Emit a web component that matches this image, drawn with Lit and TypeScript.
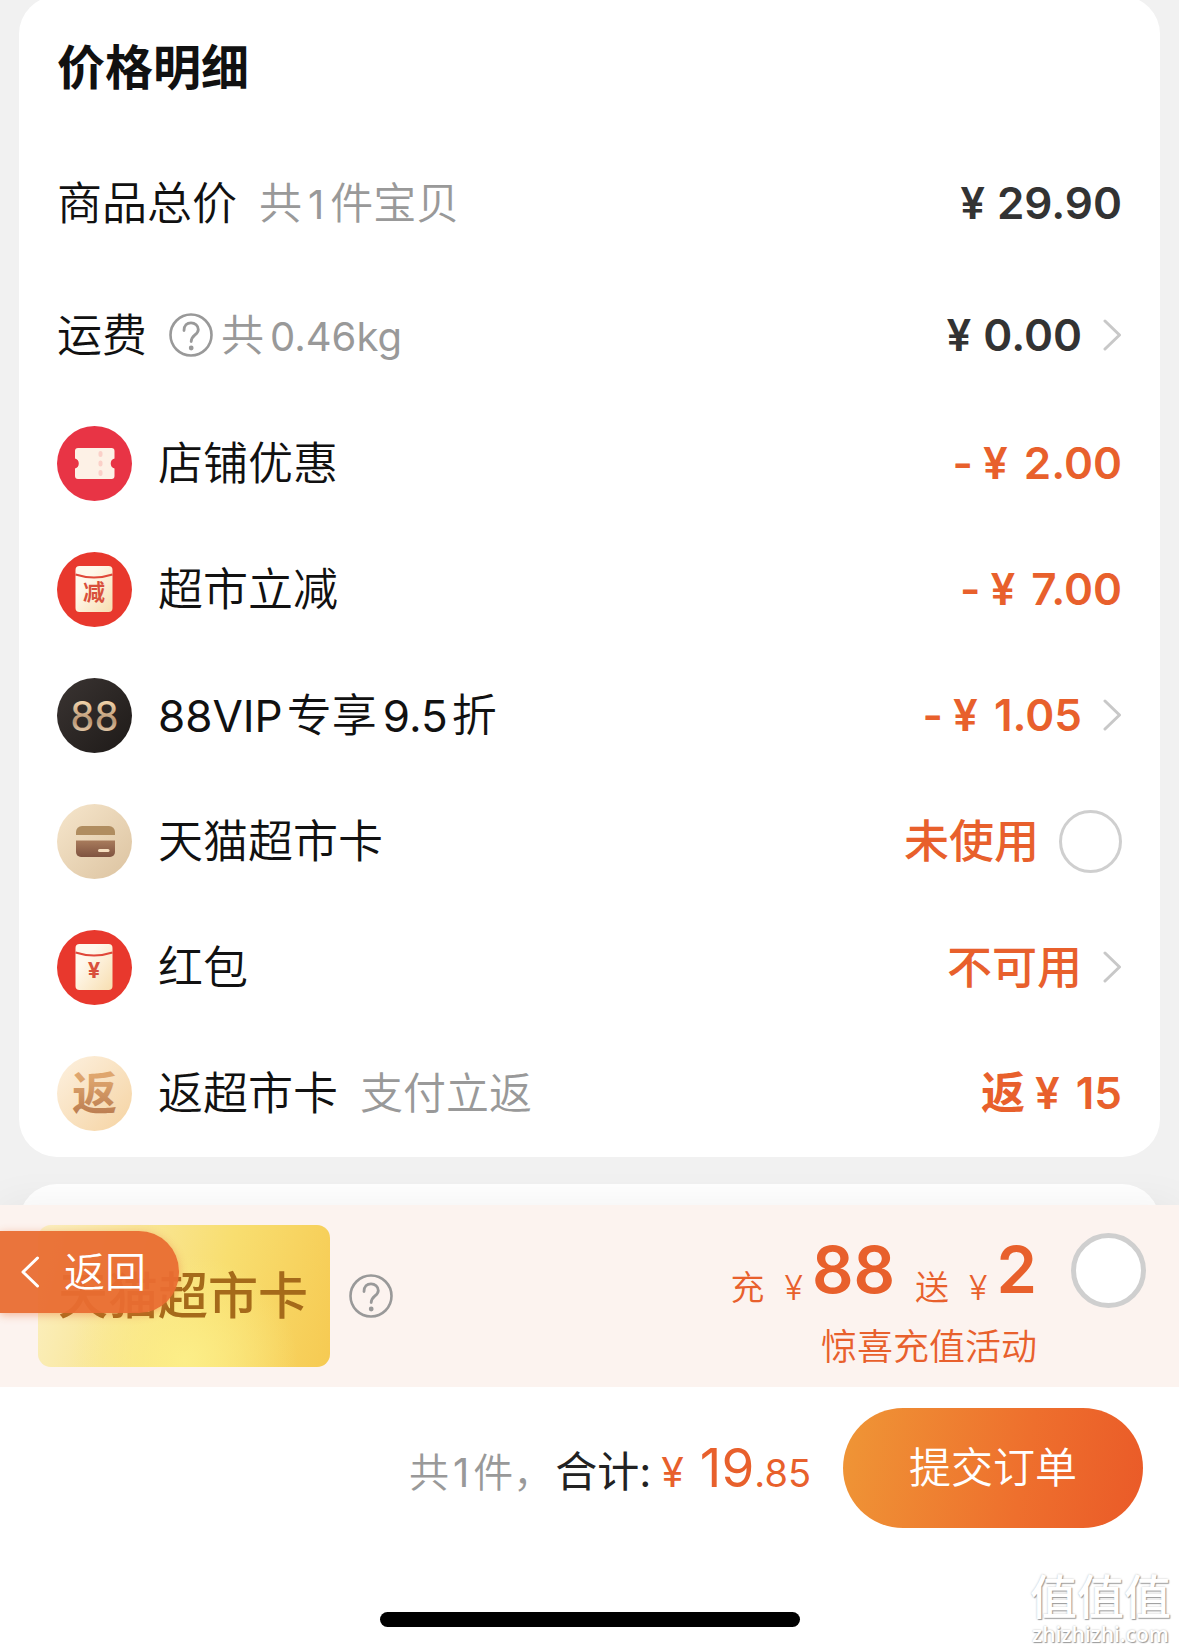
import { LitElement, html, svg, css, nothing } from "lit";
import { customElement, property, state } from "lit/decorators.js";

type IconName = "coupon" | "minus" | "vip" | "card" | "packet" | "cashback";

interface PriceRow {
  label: unknown;
  icon?: IconName;
  note?: unknown;
  help?: boolean;
  prefix?: string;
  amount?: string;
  status?: string;
  dark?: boolean;
  link?: boolean;
  toggle?: boolean;
}

const ROWS: PriceRow[] = [
  { label: "商品总价", note: html`共<span class="num">1</span>件宝贝`, amount: "29.90", dark: true },
  { label: "运费", help: true, note: html`共<span class="num">0.46kg</span>`, amount: "0.00", dark: true, link: true },
  { label: "店铺优惠", icon: "coupon", prefix: "-", amount: "2.00" },
  { label: "超市立减", icon: "minus", prefix: "-", amount: "7.00" },
  {
    label: html`<span class="latin">88VIP</span><span class="cjk">专享</span><span class="latin">9.5</span><span class="cjk">折</span>`,
    icon: "vip",
    prefix: "-",
    amount: "1.05",
    link: true,
  },
  { label: "天猫超市卡", icon: "card", status: "未使用", toggle: true },
  { label: "红包", icon: "packet", status: "不可用", link: true },
  { label: "返超市卡", icon: "cashback", note: "支付立返", prefix: "返", amount: "15" },
];

const envelope = (mark: string, size: number) => svg`
  <circle cx="37.5" cy="37.5" r="37.5" fill="#e8382d" />
  <rect x="18.5" y="14" width="37" height="46" rx="4" fill="url(#cream)" />
  <path d="M18.5 22.5Q37 28.5 55.5 22.5" fill="none" stroke="#e0483a" stroke-width="2" />
  <text x="37" y="48" font-size=${size} class="mark" fill="#d9503c">${mark}</text>`;

const ICONS: Record<IconName, unknown> = {
  coupon: svg`
    <circle cx="37.5" cy="37.5" r="37.5" fill="#e83445" />
    <path d="M21 22H54.500a3 3 0 0 1 3 3V32.500a5.200 5.200 0 0 0 0 10V50a3 3 0 0 1-3 3H21a3 3 0 0 1-3-3V42.500a5.200 5.200 0 0 0 0-10V25a3 3 0 0 1 3-3Z" fill="#fdf1e6" />
    <path d="M43.500 27v2M43.500 36.500v2M43.500 46v2" stroke="#fbd0c8" stroke-width="4" stroke-linecap="round" />`,
  minus: envelope("减", 22),
  vip: svg`
    <circle cx="37.5" cy="37.5" r="37.5" fill="url(#dark)" />
    <text x="37.5" y="53" font-size="43" class="vip" fill="url(#gold)">88</text>`,
  card: svg`
    <circle cx="37.5" cy="37.5" r="37.5" fill="url(#sand)" />
    <path d="M19 31V28a6 6 0 0 1 6-6H52a6 6 0 0 1 6 6V31Z" fill="#b08d60" />
    <path d="M19 36.500H58V48a5 5 0 0 1-5 5H24a5 5 0 0 1-5-5Z" fill="url(#brown)" />
    <path d="M42.500 46.500H51" stroke="#f6dfc0" stroke-width="3" stroke-linecap="round" />`,
  packet: envelope("¥", 22),
  cashback: svg`
    <circle cx="37.5" cy="37.5" r="37.5" fill="url(#peach)" />
    <text x="37.5" y="54" font-size="45" class="mark" fill="url(#copper)">返</text>`,
};

@customElement("row-icon")
export class RowIcon extends LitElement {
  static styles = css`
    :host { display: block; flex: none; }
    .icon { display: block; width: 75px; height: 75px; }
    .mark {
      font-family: Inter, "Noto Sans CJK SC", sans-serif;
      font-weight: 700;
      text-anchor: middle;
    }
    .vip {
      font-family: Roboto, sans-serif;
      font-weight: 400;
      text-anchor: middle;
    }
  `;

  @property() name: IconName = "coupon";

  render() {
    return html`<svg class="icon" viewBox="0 0 75 75" aria-hidden="true">
      <defs>
        <linearGradient id="cream" x1="0" y1="0" x2="1" y2="1">
          <stop offset="0.3" stop-color="#fff8ec" /><stop offset="1" stop-color="#f7deb0" />
        </linearGradient>
        <linearGradient id="dark" x1="0" y1="0" x2="1" y2="1">
          <stop offset="0" stop-color="#3a3432" /><stop offset="1" stop-color="#1e1a18" />
        </linearGradient>
        <linearGradient id="gold" x1="0" y1="0" x2="0" y2="1">
          <stop offset="0.2" stop-color="#f0d3aa" /><stop offset="0.6" stop-color="#b99675" /><stop offset="0.9" stop-color="#f3dcbc" />
        </linearGradient>
        <linearGradient id="sand" x1="0" y1="0" x2="1" y2="1">
          <stop offset="0" stop-color="#f6e6cc" /><stop offset="1" stop-color="#dcc3a0" />
        </linearGradient>
        <linearGradient id="brown" x1="0" y1="0" x2="0" y2="1">
          <stop offset="0" stop-color="#a87b5c" /><stop offset="1" stop-color="#7f5340" />
        </linearGradient>
        <linearGradient id="peach" x1="0" y1="0" x2="1" y2="1">
          <stop offset="0" stop-color="#fdf1e0" /><stop offset="1" stop-color="#f5d3a2" />
        </linearGradient>
        <linearGradient id="copper" x1="0" y1="0" x2="0" y2="1">
          <stop offset="0.2" stop-color="#dfa66e" /><stop offset="1" stop-color="#b5764c" />
        </linearGradient>
      </defs>
      ${ICONS[this.name]}
    </svg>`;
  }
}

@customElement("app-root")
export class AppRoot extends LitElement {
  static styles = css`
    :host {
      display: flex;
      flex-direction: column;
      position: relative;
      min-height: 100vh;
      overflow: hidden;
      background: #f1f1f1;
      color: #111;
      font-family: Inter, "Noto Sans CJK SC", sans-serif;
      font-size: 45px;
      line-height: 1;
    }
    * { box-sizing: border-box; }
    button {
      margin: 0;
      padding: 0;
      border: 0;
      background: none;
      color: inherit;
      font: inherit;
    }
    .page {
      flex: 1;
      display: flex;
      flex-direction: column;
      gap: 27px;
      padding: 0 19px;
    }
    .card {
      margin-top: -4px;
      padding: 0 38px 1px;
      border-radius: 38px;
      background: #fff;
    }
    .next {
      flex: 1;
      min-height: 60px;
      margin-bottom: -39px;
      border-radius: 38px 38px 0 0;
      background: #fff;
    }
    .title {
      display: flex;
      align-items: center;
      height: 140px;
      margin: 0;
      padding-top: 3px;
      font-size: 48px;
      font-weight: 600;
    }
    .rows { margin: 0; padding: 0; list-style: none; }
    .row {
      display: flex;
      align-items: center;
      justify-content: space-between;
      height: 132px;
      padding-top: 2px;
    }
    .row.with-icon { height: 126px; padding-top: 0; }
    .left, .value, .name { display: flex; align-items: center; }
    .name { gap: 26px; }
    .left { gap: 22px; }
    .note {
      color: #999;
      font-size: 43px;
      font-weight: 350;
    }
    .help + .note { margin-left: -14px; }
    .label { font-weight: 350; }
    .latin { font-size: 44px; font-weight: 400; }
    .num { margin: 0 6px; font-size: 40px; font-weight: 400; }
    .cjk { margin: 0 6px 0 4px; }
    .value {
      gap: 20px;
      color: #e8602c;
      font-size: 44px;
      font-weight: 600;
    }
    .value.dark { color: #333; }
    .status { font-size: 45px; font-weight: 500; }
    .money { display: flex; gap: 16px; }
    .dark .money { gap: 12px; }
    .sign { display: flex; gap: 10px; }
    .chevron { display: block; width: 20px; height: 32px; }
    .help { display: block; flex: none; }
    .help-icon { display: block; width: 44px; height: 44px; }
    .tick {
      appearance: none;
      flex: none;
      width: 63px;
      height: 63px;
      margin: 0;
      border: 3px solid #cfcfcf;
      border-radius: 50%;
      background: #fff;
    }
    .tick:checked { border-color: #e8602c; background: #e8602c; }
    .tick.large { width: 75px; height: 75px; border-width: 5px; }

    .promo {
      position: relative;
      display: flex;
      justify-content: space-between;
      height: 182px;
      padding: 20px 33px 20px 38px;
      background: #fcf3ef;
      box-shadow: 0 0 40px rgba(0, 0, 0, 0.06);
      color: #e8602c;
    }
    .brand { display: flex; align-items: center; gap: 19px; }
    .gold {
      display: flex;
      align-items: center;
      width: 292px;
      height: 142px;
      padding: 0 20px;
      border-radius: 13px;
      background:
        radial-gradient(ellipse at 50% 95%, #fcee88 0, #fcee8800 55%),
        linear-gradient(105deg, #fbf0c4 0, #f9e698 30%, #f8de70 60%, #f6ca52 100%);
      color: #a56a1a;
      font-size: 50px;
      font-weight: 500;
      white-space: nowrap;
    }
    .offer { display: flex; gap: 34px; font-size: 36px; font-weight: 350; }
    .offer-text { display: flex; flex-direction: column; align-items: flex-end; gap: 14px; }
    .offer-line { display: flex; align-items: flex-end; gap: 20px; height: 90px; }
    .offer-word { padding-bottom: 10px; font-size: 34px; }
    .offer-money { display: flex; align-items: flex-end; gap: 9px; }
    .offer-figure { font-size: 65px; font-weight: 600; line-height: 90px; }
    .offer .tick { margin-top: 8px; }
    .back {
      position: absolute;
      left: 0;
      top: 26px;
      display: flex;
      align-items: center;
      gap: 24px;
      width: 179px;
      height: 82px;
      padding-left: 20px;
      border-radius: 0 40px 40px 0;
      background: rgba(233, 109, 50, 0.95);
      box-shadow: 0 2px 8px rgba(233, 109, 50, 0.45);
      color: #fff;
      font-size: 41px;
      font-weight: 350;
      text-decoration: none;
    }
    .back-icon { display: block; width: 20px; height: 32px; }

    .checkout {
      position: relative;
      display: flex;
      flex-direction: column;
      align-items: center;
      justify-content: space-between;
      height: 264px;
      padding: 21px 36px 24px;
      background: #fff;
    }
    .summary {
      align-self: flex-end;
      display: flex;
      align-items: center;
      gap: 32px;
    }
    .total { display: flex; align-items: baseline; font-weight: 400; }
    .count { margin-right: 2px; color: #999; font-size: 40px; font-weight: 350; }
    .count .num { margin: 0 4px; }
    .sum-label { margin-right: 10px; color: #222; font-size: 42px; }
    .sum { color: #e8602c; font-size: 38px; }
    .sum-sign { font-size: 41px; }
    .sum-main { margin-left: 16px; font-size: 53px; }
    .submit {
      width: 300px;
      height: 120px;
      border-radius: 60px;
      background: linear-gradient(100deg, #ef9636, #ee6f2d 60%, #ea5a28);
      color: #fff;
      font-size: 42px;
      font-weight: 350;
    }
    .home { width: 420px; height: 15px; border-radius: 8px; background: #000; }
    .stamp {
      position: absolute;
      right: 8px;
      bottom: 6px;
      display: flex;
      flex-direction: column;
      align-items: center;
      gap: 4px;
      color: #fff;
      text-shadow: 1px 1px 1px #999, 0 0 2px #bbb;
      font-size: 21px;
    }
    .stamp-mark { font-size: 47px; font-weight: 500; }
    .stamp-site { font-family: "Open Sans", sans-serif; font-weight: 600; }
  `;

  @state() private useCard = false;
  @state() private topUp = false;

  private chevron() {
    return html`<svg class="chevron" viewBox="0 0 20 32" aria-hidden="true">
      <path d="M3 2 17.500 16 3 30" fill="none" stroke="#c8c8c8" stroke-width="3" stroke-linecap="round" stroke-linejoin="round" />
    </svg>`;
  }

  private help(name: string) {
    return html`<button class="help" type="button" aria-label=${name}>
      <svg class="help-icon" viewBox="0 0 44 44" aria-hidden="true">
        <circle cx="22" cy="22" r="20.500" fill="none" stroke="#999" stroke-width="2.600" />
        <path d="M15 17.500C15 12.500 18 9.800 22 9.800S29.300 12.600 29.300 16.500C29.300 22 22.200 22 22.200 28.500" fill="none" stroke="#999" stroke-width="2.800" stroke-linecap="round" />
        <circle cx="22.200" cy="35" r="2.400" fill="#999" />
      </svg>
    </button>`;
  }

  private value(row: PriceRow) {
    const text = row.status
      ? html`<span class="status">${row.status}</span>`
      : html`<span class="money">
          <span class="sign">${row.prefix ? html`<span>${row.prefix}</span>` : nothing}<span>¥</span></span>
          <span>${row.amount}</span>
        </span>`;
    const tone = row.dark ? "value dark" : "value";
    if (row.link) return html`<button class=${tone} type="button">${text}${this.chevron()}</button>`;
    if (row.toggle) {
      return html`<label class=${tone}>${text}
        <input class="tick" type="checkbox" .checked=${this.useCard}
          @change=${(e: Event) => (this.useCard = (e.target as HTMLInputElement).checked)} />
      </label>`;
    }
    return html`<span class=${tone}>${text}</span>`;
  }

  render() {
    return html`
      <main class="page">
        <section class="card">
          <h1 class="title">价格明细</h1>
          <ul class="rows">
            ${ROWS.map(
              (row) => html`<li class=${row.icon ? "row with-icon" : "row"}>
                <div class="left">
                  <div class="name">
                    ${row.icon ? html`<row-icon .name=${row.icon}></row-icon>` : nothing}
                    <span class="label">${row.label}</span>
                  </div>
                  ${row.help ? this.help("运费说明") : nothing}
                  ${row.note ? html`<span class="note">${row.note}</span>` : nothing}
                </div>
                ${this.value(row)}
              </li>`,
            )}
          </ul>
        </section>
        <section class="next"></section>
      </main>

      <section class="promo">
        <div class="brand">
          <div class="gold">天猫超市卡</div>
          ${this.help("超市卡说明")}
        </div>
        <label class="offer">
          <span class="offer-text">
            <span class="offer-line">
              <span class="offer-word">充</span>
              <span class="offer-money"><span class="offer-word">¥</span><span class="offer-figure">88</span></span>
              <span class="offer-word">送</span>
              <span class="offer-money"><span class="offer-word">¥</span><span class="offer-figure">2</span></span>
            </span>
            <span>惊喜充值活动</span>
          </span>
          <input class="tick large" type="checkbox" .checked=${this.topUp}
            @change=${(e: Event) => (this.topUp = (e.target as HTMLInputElement).checked)} />
        </label>
        <a class="back" href="#back">
          <svg class="back-icon" viewBox="0 0 20 32" aria-hidden="true">
            <path d="M17.500 2 3 16 17.500 30" fill="none" stroke="#fff" stroke-width="3" stroke-linecap="round" stroke-linejoin="round" />
          </svg>
          返回
        </a>
      </section>

      <footer class="checkout">
        <div class="summary">
          <div class="total">
            <span class="count">共<span class="num">1</span>件，</span>
            <span class="sum-label">合计:</span>
            <span class="sum"><span class="sum-sign">¥</span><span class="sum-main">19</span>.85</span>
          </div>
          <button class="submit" type="button">提交订单</button>
        </div>
        <div class="home"></div>
      </footer>

      <div class="stamp"><span class="stamp-mark">值值值</span><span class="stamp-site">zhizhizhi.com</span></div>
    `;
  }
}
